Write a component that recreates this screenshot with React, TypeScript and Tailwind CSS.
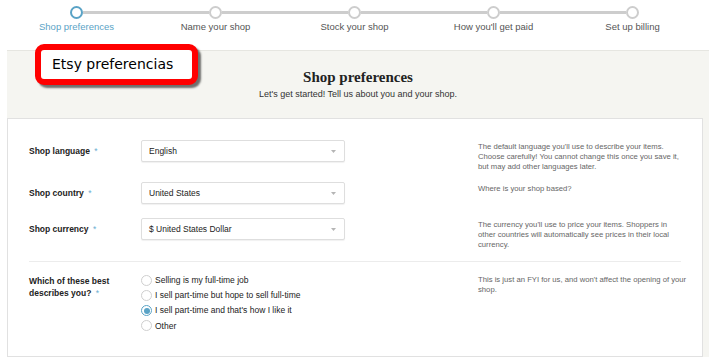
const steps = ['Shop preferences', 'Name your shop', 'Stock your shop', "How you'll get paid", 'Set up billing'];

const fields = [
  {
    label: 'Shop language',
    value: 'English',
    help: "The default language you'll use to describe your items. Choose carefully! You cannot change this once you save it, but may add other languages later.",
    gap: 'mt-0',
  },
  {
    label: 'Shop country',
    value: 'United States',
    help: 'Where is your shop based?',
    gap: 'mt-[10px]',
  },
  {
    label: 'Shop currency',
    value: '$ United States Dollar',
    help: "The currency you'll use to price your items. Shoppers in other countries will automatically see prices in their local currency.",
    gap: 'mt-[14px]',
  },
];

const options = [
  'Selling is my full-time job',
  'I sell part-time but hope to sell full-time',
  "I sell part-time and that's how I like it",
  'Other',
];

function Stepper() {
  return (
    <div className="ml-[7px] flex h-[50px] w-[695px]">
      {steps.map((step, i) => (
        <div key={step} className="flex w-[139px] flex-col items-center pt-[6px]">
          <div className="flex w-full items-center">
            <div className={`h-[3px] flex-1 ${i === 0 ? '' : 'bg-[#cdcdcd]'}`} />
            <div
              className={`h-[13px] w-[13px] rounded-full border-[2.5px] bg-white ${
                i === 0 ? 'border-[#5aa3c6]' : 'border-[#cdcdcd]'
              }`}
            />
            <div className={`h-[3px] flex-1 ${i === steps.length - 1 ? '' : 'bg-[#cdcdcd]'}`} />
          </div>
          <span className={`mt-[2px] text-[9.5px] leading-[12px] ${i === 0 ? 'text-[#5aa3c6]' : 'text-[#555]'}`}>
            {step}
          </span>
        </div>
      ))}
    </div>
  );
}

function Select({ value }: { value: string }) {
  return (
    <div className="flex h-[22px] w-[204px] shrink-0 items-center justify-between rounded-[2px] border border-[#dedede] bg-white px-[7px] shadow-[0_1px_1px_rgba(0,0,0,0.06)]">
      <span className="text-[8.5px] text-[#222]">{value}</span>
      <svg width="5" height="3" viewBox="0 0 5 3" className="mr-[1px]">
        <path d="M0 0h5L2.5 3z" fill="#b5b5b5" />
      </svg>
    </div>
  );
}

export default function App() {
  return (
    <div className="relative h-[364px] w-[709px] overflow-hidden bg-white font-['Liberation_Sans',Arial,sans-serif]">
      <Stepper />

      <div className="ml-[7px] border-t border-[#e6e6e1] bg-[#f5f5f1] pt-[16px]">
        <h1 className="text-center font-['Liberation_Serif',serif] text-[15px] font-bold leading-[20px] text-[#222]">
          Shop preferences
        </h1>
        <p className="mt-[1px] text-center text-[9px] leading-[12px] text-[#333]">
          Let's get started! Tell us about you and your shop.
        </p>

        <div className="mr-[6px] mt-[18px] border border-[#e1e1e1] bg-white pb-[24px] pl-[21px] pt-[21px]">
          {fields.map((f) => (
            <div key={f.label} className={`flex items-start ${f.gap}`}>
              <div className="w-[112px] shrink-0 text-[8.5px] font-bold leading-[22px] text-[#222]">
                {f.label} <span className="ml-[2px] font-normal text-[#6aaed0]">*</span>
              </div>
              <Select value={f.value} />
              <p className="ml-[133px] mt-[2px] w-[205px] shrink-0 text-[7.7px] leading-[10px] text-[#666]">{f.help}</p>
            </div>
          ))}

          <div className="mb-[12px] mr-[21px] mt-[11px] h-px bg-[#ececec]" />

          <div className="flex items-start">
            <div className="w-[112px] shrink-0 pt-[1px] text-[8.5px] font-bold leading-[12px] text-[#222]">
              Which of these best
              <br />
              describes you? <span className="ml-[2px] font-normal text-[#6aaed0]">*</span>
            </div>
            <div className="flex w-[204px] shrink-0 flex-col gap-[3.3px]">
              {options.map((o, i) => (
                <label key={o} className="flex h-[12px] items-center gap-[3px] text-[8.5px] text-[#222]">
                  {i === 2 ? (
                    <span className="flex h-[11px] w-[11px] items-center justify-center rounded-full border border-[#5aa3c6] bg-white">
                      <span className="h-[6px] w-[6px] rounded-full bg-[#5aa3c6]" />
                    </span>
                  ) : (
                    <span className="h-[11px] w-[11px] rounded-full border border-[#cfcfcf] bg-white" />
                  )}
                  {o}
                </label>
              ))}
            </div>
            <p className="ml-[133px] mt-[1px] w-[212px] shrink-0 text-[7.7px] leading-[10px] text-[#666]">
              This is just an FYI for us, and won't affect the opening of your shop.
            </p>
          </div>
        </div>
      </div>

      <div className="absolute left-[35px] top-[44px] flex h-[41px] w-[163px] items-center rounded-[9px] border-[6px] border-[#ff0000] bg-white pl-[11px] shadow-[3px_3px_2px_rgba(0,0,0,0.55)]">
        <span className="font-['DejaVu_Sans',Verdana,sans-serif] text-[14px] text-black">Etsy preferencias</span>
      </div>
    </div>
  );
}
